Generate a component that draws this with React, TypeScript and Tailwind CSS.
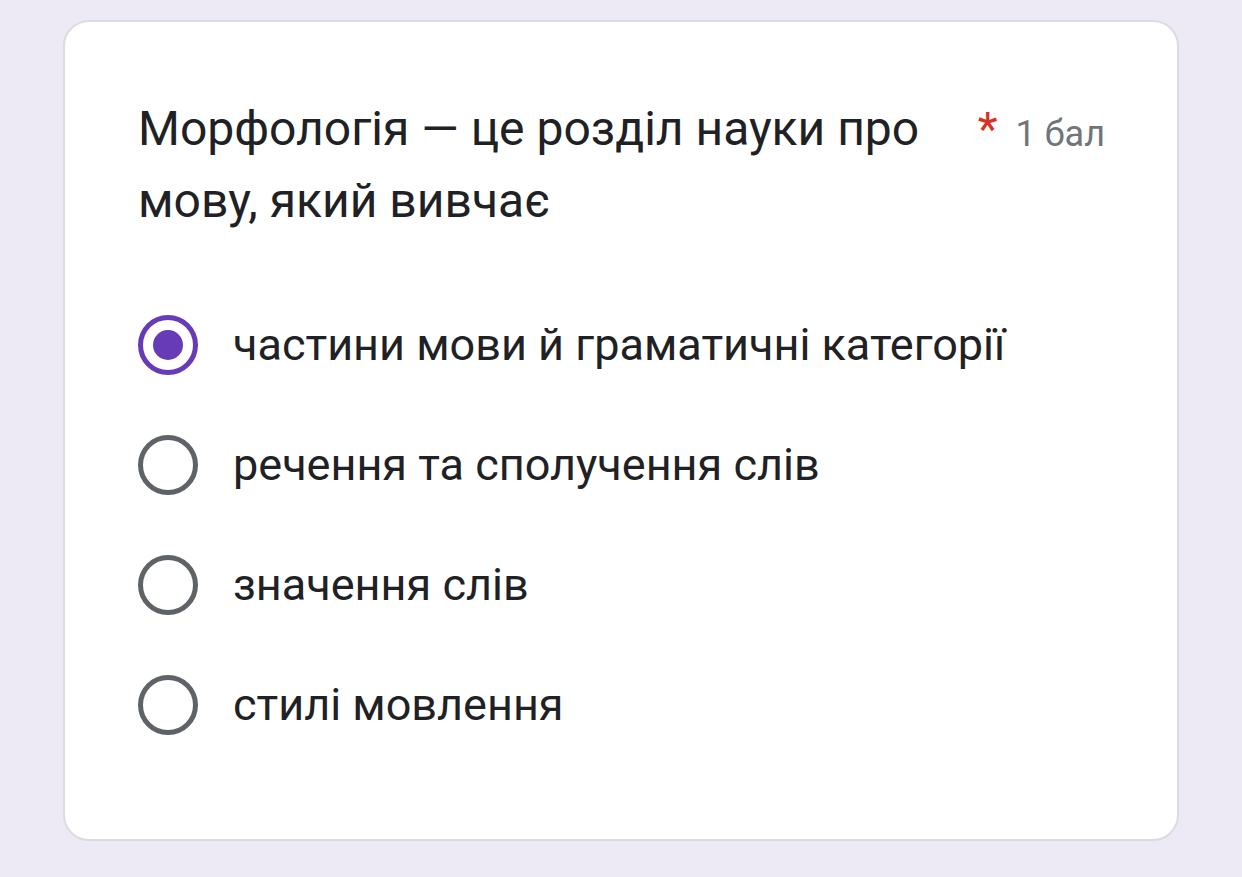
export default function App() {
  const options = [
    "частини мови й граматичні категорії",
    "речення та сполучення слів",
    "значення слів",
    "стилі мовлення",
  ];
  const selected = 0;

  return (
    <div
      className="min-h-[877px] bg-[#edeaf6] pt-[20px] pl-[63px] pr-[63px]"
      style={{ fontFamily: "Roboto, 'Noto Sans', sans-serif" }}
    >
      <div className="w-[1116px] h-[821px] bg-white border-2 border-[#dadce0] rounded-[26px] pl-[73px] pr-[72px] pt-[71px]">
        {/* Question header */}
        <div className="flex items-start">
          <div className="w-[810px] text-[48px] leading-[72px] text-[#202124]">
            Морфологія — це розділ науки про мову, який вивчає
          </div>
          <div className="flex items-start ml-auto">
            <span className="text-[#d93025] text-[46px] leading-[60px] mt-[6px]">*</span>
            <span className="ml-[18px] text-[#70757a] text-[36px] leading-[60px] mt-[11px]">1 бал</span>
          </div>
        </div>

        {/* Options */}
        <div className="mt-[78px] flex flex-col gap-[60px]">
          {options.map((opt, i) => (
            <div key={opt} className="flex items-center h-[60px]">
              {i === selected ? (
                <div className="w-[60px] h-[60px] rounded-full border-[5px] border-[#673ab7] flex items-center justify-center">
                  <div className="w-[30px] h-[30px] rounded-full bg-[#673ab7]" />
                </div>
              ) : (
                <div className="w-[60px] h-[60px] rounded-full border-[5px] border-[#5f6368]" />
              )}
              <span className="ml-[35px] text-[45px] text-[#202124]">{opt}</span>
            </div>
          ))}
        </div>
      </div>
    </div>
  );
}
